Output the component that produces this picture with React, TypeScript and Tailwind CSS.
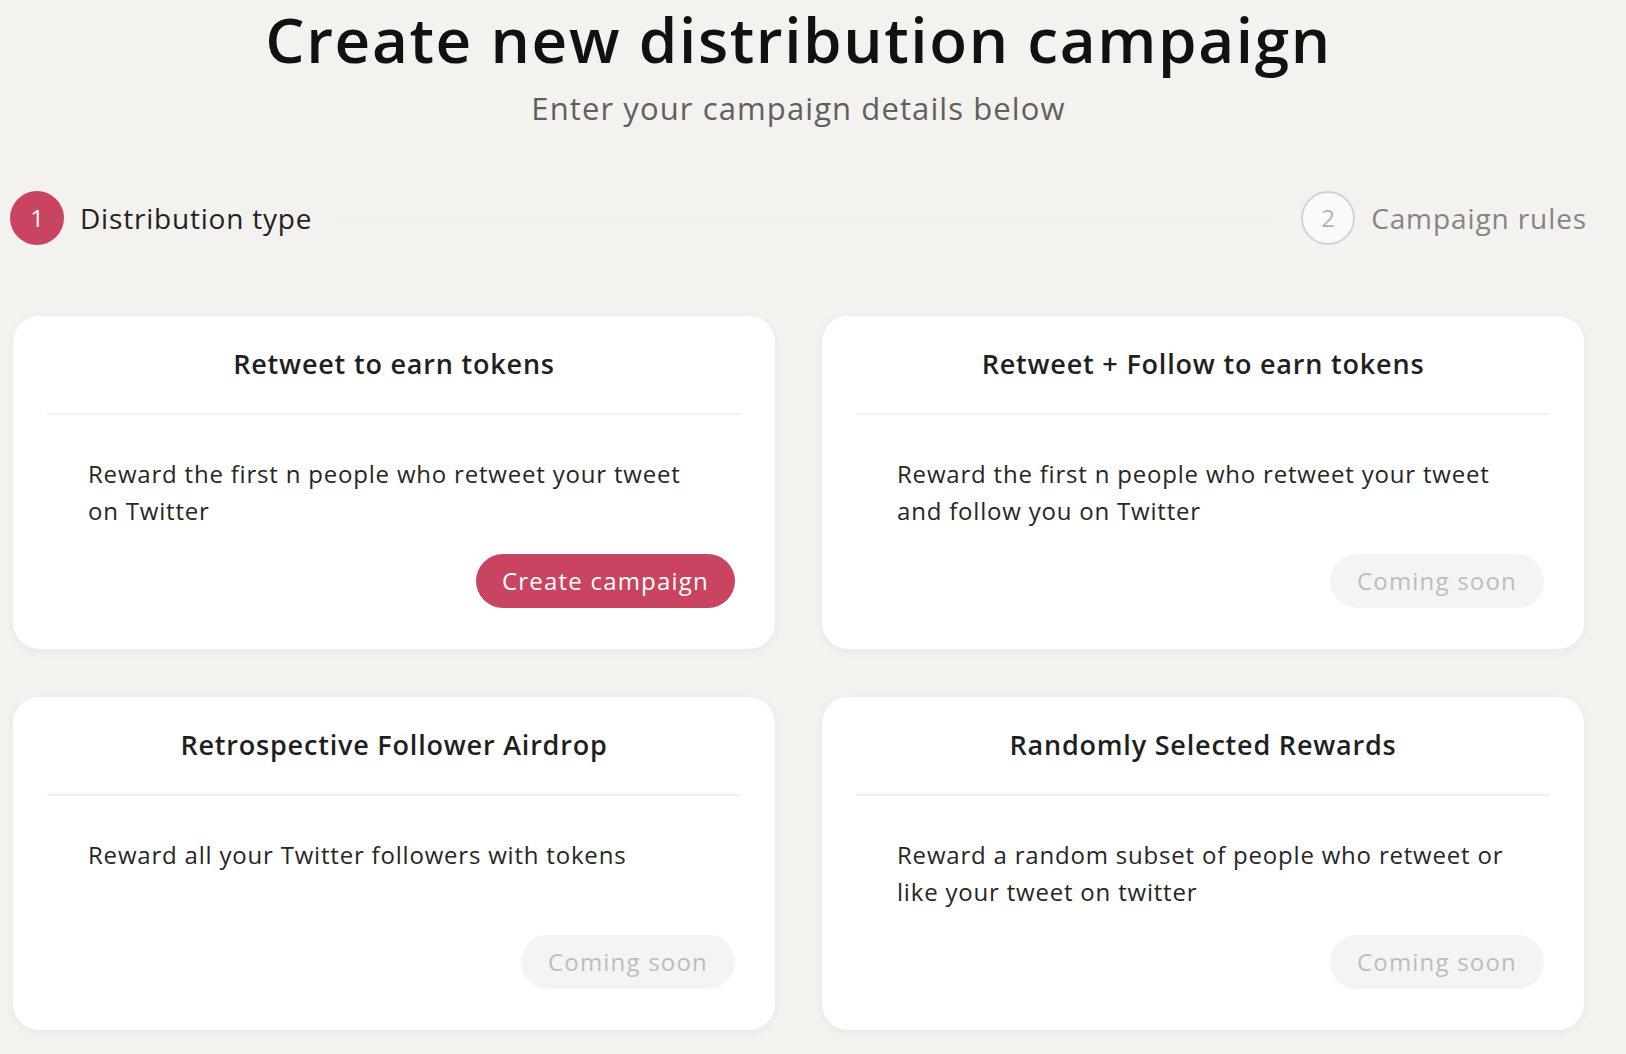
const font = "font-['Open_Sans','Liberation_Sans',sans-serif]";

interface Option {
  title: string;
  text: string;
  active?: boolean;
}

const options: Option[] = [
  {
    title: "Retweet to earn tokens",
    text: "Reward the first n people who retweet your tweet on Twitter",
    active: true,
  },
  {
    title: "Retweet + Follow to earn tokens",
    text: "Reward the first n people who retweet your tweet and follow you on Twitter",
  },
  {
    title: "Retrospective Follower Airdrop",
    text: "Reward all your Twitter followers with tokens",
  },
  {
    title: "Randomly Selected Rewards",
    text: "Reward a random subset of people who retweet or like your tweet on twitter",
  },
];

function OptionCard({ title, text, active }: Option) {
  return (
    <div className="flex h-[333px] flex-col rounded-[26px] bg-white px-[34px] shadow-[0_2px_10px_rgba(0,0,0,0.05)]">
      <h2 className="pt-[30px] pb-[31px] text-center text-[27px] leading-[36px] font-semibold tracking-[0.8px] text-[#1f1f1f]">
        {title}
      </h2>
      <div className="h-[2px] bg-[#f1f1f1]" />
      <p className="mt-[40px] pl-[41px] pr-[30px] text-[24px] leading-[37px] tracking-[0.8px] text-[#262626]">
        {text}
      </p>
      <div className="mt-auto mb-[41px] flex justify-end pr-[6px]">
        {active ? (
          <button
            type="button"
            className="h-[54px] w-[259px] rounded-full bg-[#c94460] text-[24px] tracking-[1.2px] text-white"
          >
            Create campaign
          </button>
        ) : (
          <button
            type="button"
            className="h-[54px] w-[214px] rounded-full bg-[#f4f4f4] text-[24px] tracking-[1.2px] text-[#bdbdbd]"
          >
            Coming soon
          </button>
        )}
      </div>
    </div>
  );
}

export default function App() {
  return (
    <div className={`min-h-screen bg-[#f3f2ef] ${font}`}>
      <div className="ml-[10px] w-[1577px]">
        <header className="text-center">
          <h1 className="pt-[3px] text-[62px] leading-[72px] font-semibold tracking-[1.6px] text-[#111]">
            Create new distribution campaign
          </h1>
          <p className="mt-[13px] text-[31px] leading-[40px] tracking-[1.1px] text-[#606060]">
            Enter your campaign details below
          </p>
        </header>

        <div className="mt-[63px] flex items-center">
          <div className="flex h-[54px] w-[54px] items-center justify-center rounded-full bg-[#c94460] text-[24px] text-white">
            1
          </div>
          <span className="ml-[16px] text-[28px] font-medium tracking-[0.8px] text-[#222]">
            Distribution type
          </span>
          <div className="mx-[28px] h-px flex-1 bg-[#e9e8e4]" />
          <div className="flex h-[54px] w-[54px] items-center justify-center rounded-full border-2 border-[#d2d2d2] bg-[#fafafa] text-[24px] text-[#b3b3b3]">
            2
          </div>
          <span className="ml-[16px] text-[28px] tracking-[0.9px] text-[#858585]">Campaign rules</span>
        </div>

        <div className="mt-[71px] grid grid-cols-2 gap-x-[47px] gap-y-[48px] px-[3px] pb-[25px]">
          {options.map((o) => (
            <OptionCard key={o.title} {...o} />
          ))}
        </div>
      </div>
    </div>
  );
}
